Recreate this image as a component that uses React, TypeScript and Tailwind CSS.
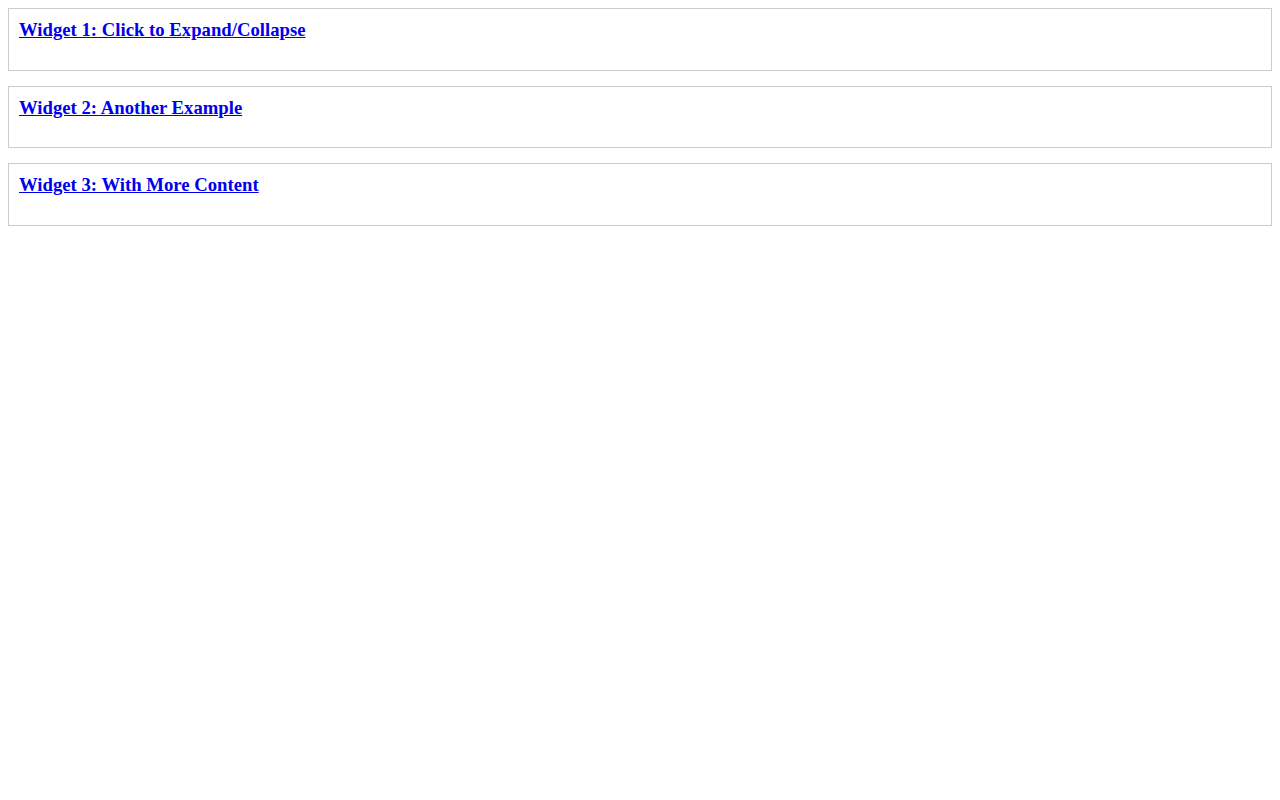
import React from 'react';

const widgets = [
  'Widget 1: Click to Expand/Collapse',
  'Widget 2: Another Example',
  'Widget 3: With More Content',
];

export default function App() {
  return (
    <div className="min-h-screen bg-white p-2 font-['Liberation_Serif',serif]">
      {widgets.map((title) => (
        <div key={title} className="mb-[15px] border border-[#cccccc] p-[10px]">
          <h3 className="mb-[18.72px] text-[18.72px] leading-[normal] font-bold">
            <a href="#" className="text-[#0000ee] underline">
              {title}
            </a>
          </h3>
        </div>
      ))}
    </div>
  );
}
